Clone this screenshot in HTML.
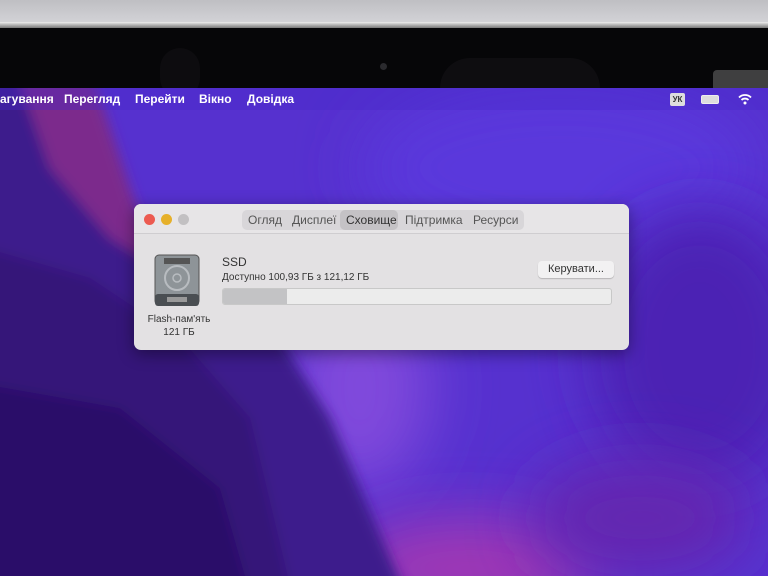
<!DOCTYPE html>
<html><head><meta charset="utf-8"><style>
*{margin:0;padding:0;box-sizing:border-box}
html,body{width:768px;height:576px;overflow:hidden}
body{position:relative;font-family:"Liberation Sans","DejaVu Sans",sans-serif;background:#000}
.top{position:absolute;left:0;top:0;width:768px;height:24px;background:linear-gradient(#bfbfc3,#d4d4d8)}
.rim{position:absolute;left:0;top:22px;width:768px;height:6px;background:linear-gradient(#eee,#777)}
.bezel{position:absolute;left:0;top:28px;width:768px;height:60px;background:#060608;overflow:hidden}
.screen{position:absolute;left:0;top:88px;width:768px;height:488px;overflow:hidden;background:#5530cc}
.menu{position:absolute;left:0;top:0;width:768px;height:22px;background:rgba(70,40,200,.35);color:#fff;font-size:12px;font-weight:bold}
.menu span{position:absolute;top:4px}
.win{position:absolute;left:134px;top:116px;width:495px;height:146px;background:#e3e1e3;border-radius:7px;box-shadow:0 4px 16px rgba(0,0,0,.4)}
.tb{height:30px;border-bottom:1px solid #cfcdd0;position:relative;background:#e7e5e7;border-radius:7px 7px 0 0}
.dot{position:absolute;top:10px;width:11px;height:11px;border-radius:50%}
.tabs{position:absolute;left:108px;top:6px;height:20px;width:282px;background:#d8d6d9;border-radius:5px;font-size:12px;color:#555}
.tabs span{position:absolute;top:3px}
.sel{position:absolute;left:98px;top:0;width:58px;height:20px;background:#c4c2c5;border-radius:5px}
.t{position:absolute;color:#333}
</style></head><body>
<div class="top"></div><div class="rim"></div><div class="bezel">
<div style="position:absolute;left:160px;top:20px;width:40px;height:50px;border-radius:20px;background:#0d0c0f"></div>
<div style="position:absolute;left:440px;top:30px;width:160px;height:60px;border-radius:40px;background:#0e0d10"></div>
<div style="position:absolute;left:380px;top:35px;width:7px;height:7px;border-radius:50%;background:#2a2a2e"></div>
<div style="position:absolute;left:713px;top:42px;width:55px;height:20px;background:#777;opacity:.5;border-radius:4px 0 0 0"></div></div>
<div class="screen">
<svg width="768" height="488" style="position:absolute;left:0;top:0">
<defs><filter id="b" filterUnits="userSpaceOnUse" x="-200" y="-200" width="1200" height="900"><feGaussianBlur stdDeviation="6"/></filter>
<filter id="b2" filterUnits="userSpaceOnUse" x="-200" y="-200" width="1200" height="900"><feGaussianBlur stdDeviation="30"/></filter></defs>
<rect width="768" height="488" fill="#5631cf"/>
<ellipse cx="560" cy="80" rx="200" ry="90" fill="#5a38dc" filter="url(#b2)"/>
<ellipse cx="700" cy="260" rx="110" ry="140" fill="#4c24b4" filter="url(#b2)"/>
<ellipse cx="360" cy="300" rx="70" ry="100" fill="#8048dc" filter="url(#b2)"/>
<ellipse cx="470" cy="480" rx="130" ry="50" fill="#a038b4" filter="url(#b2)"/>
<ellipse cx="640" cy="430" rx="110" ry="60" fill="#6428b0" filter="url(#b2)"/>
<g filter="url(#b)">
<polygon points="-50,-50 30,-50 80,80 150,130 260,220 330,330 420,540 -50,540" fill="#3e1a8c"/>
<polygon points="15,-20 90,-20 130,100 160,180 110,150 50,80" fill="#7c2a8c"/>
<polygon points="-50,150 90,190 180,250 250,330 300,540 -50,540" fill="#341679"/>
<polygon points="-50,290 120,320 220,400 260,540 -50,540" fill="#2b1169"/>
</g>
</svg>
<div class="menu">
<span style="left:0">агування</span><span style="left:64px">Перегляд</span><span style="left:135px">Перейти</span><span style="left:199px">Вікно</span><span style="left:247px">Довідка</span>
<span style="left:670px;top:5px;width:15px;height:13px;background:#ddd;color:#333;font-size:8px;border-radius:2px;text-align:center;line-height:13px">УК</span>
<span style="left:701px;top:7px;width:18px;height:9px;border:1px solid #eee;border-radius:2px;background:#ddd"></span>
<svg style="position:absolute;left:738px;top:5px" width="14" height="12" viewBox="0 0 14 12"><path d="M1 4.5 A8.5 8.5 0 0 1 13 4.5" stroke="#fff" stroke-width="1.8" fill="none"/><path d="M3.5 7 A5 5 0 0 1 10.5 7" stroke="#fff" stroke-width="1.8" fill="none"/><circle cx="7" cy="10" r="1.5" fill="#fff"/></svg>
</div>
<div class="win">
<div class="tb">
<div class="dot" style="left:10px;background:#ec5a50"></div>
<div class="dot" style="left:27px;background:#e6b02a"></div>
<div class="dot" style="left:44px;background:#c2c0c2"></div>
<div class="tabs"><div class="sel"></div>
<span style="left:6px">Огляд</span><span style="left:50px">Дисплеї</span><span style="left:104px;color:#333;position:absolute">Сховище</span><span style="left:163px">Підтримка</span><span style="left:231px">Ресурси</span></div>
</div>
<svg style="position:absolute;left:20px;top:50px" width="46" height="54" viewBox="0 0 46 54">
<rect x="1" y="1" width="44" height="50" rx="4" fill="#8e9498" stroke="#555"/>
<rect x="1" y="40" width="44" height="12" rx="3" fill="#4a4e52"/>
<rect x="13" y="43" width="20" height="5" fill="#999"/>
<rect x="10" y="4" width="26" height="6" fill="#555"/>
<circle cx="23" cy="24" r="12" fill="none" stroke="#b8bcc0" stroke-width="2"/>
<circle cx="23" cy="24" r="4" fill="none" stroke="#b8bcc0" stroke-width="1.5"/>
</svg>
<div class="t" style="left:12px;top:109px;font-size:10px;width:66px;text-align:center;line-height:13px">Flash-пам'ять<br>121 ГБ</div>
<div class="t" style="left:88px;top:51px;font-size:12px">SSD</div>
<div class="t" style="left:88px;top:68px;font-size:10px">Доступно 100,93 ГБ з 121,12 ГБ</div>
<div style="position:absolute;left:404px;top:57px;width:76px;height:17px;background:#f2f1f2;border-radius:4px;font-size:11px;color:#333;text-align:center;line-height:17px;box-shadow:0 1px 1px rgba(0,0,0,.2)">Керувати...</div>
<div style="position:absolute;left:88px;top:84px;width:390px;height:17px;background:#ececec;border:1px solid #c8c8c8;border-radius:3px;overflow:hidden"><div style="width:64px;height:100%;background:#c3c3c5"></div></div>
</div>
</div>
</body></html>
